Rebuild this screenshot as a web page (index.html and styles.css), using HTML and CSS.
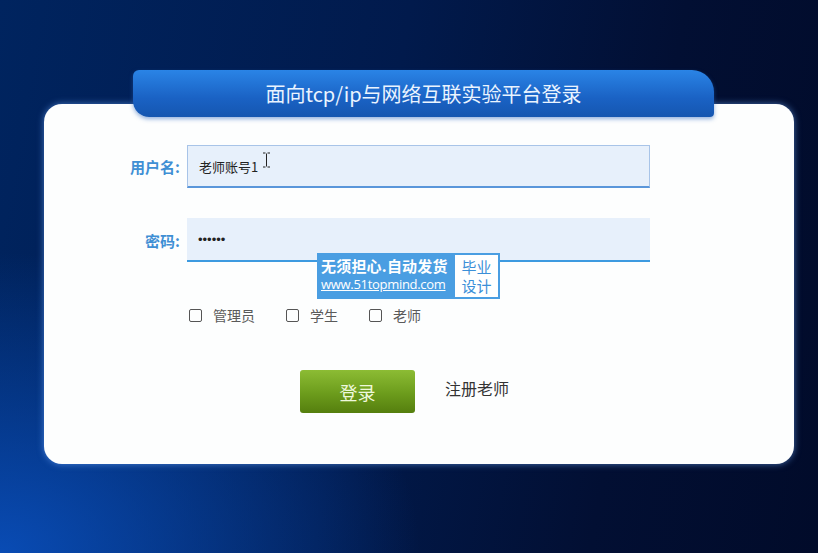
FILE: index.html
```html
<!DOCTYPE html>
<html>
  <head>
    <title>面向tcp/ip与网络互联实验平台登录</title>
    <link rel="stylesheet" href="styles.css">
  </head>
  <body>
    <div class="page">
      <div class="tab">面向tcp/ip与网络互联实验平台登录</div>
      <div class="card">
        <div class="row">
          <label class="label">用户名:</label>
          <div class="field">
            <input type="text" class="input input-user" value="老师账号1" />
            <svg class="ibeam" width="9" height="16" viewBox="0 0 9 16">
              <path d="M1 1h2.5M5.5 1H8M4.5 1.5v13M1 15h2.5M5.5 15H8" stroke="#222" stroke-width="1" fill="none" />
            </svg>
          </div>
        </div>
        <div class="row row-pass">
          <label class="label">密码:</label>
          <div class="field">
            <input type="password" class="input input-pass" value="123456" />
          </div>
        </div>
        <div class="roles">
          <label class="role"><span class="box"></span>管理员</label>
          <label class="role"><span class="box"></span>学生</label>
          <label class="role"><span class="box"></span>老师</label>
        </div>
        <div class="actions">
          <button class="btn-login">登录</button>
          <a class="register">注册老师</a>
        </div>

        <div class="stamp">
          <div class="stamp-main">
            <div class="stamp-title">无须担心.自动发货</div>
            <div class="stamp-url">www.51topmind.com</div>
          </div>
          <div class="stamp-side">
            <span>毕业</span>
            <span>设计</span>
          </div>
        </div>
      </div>
    </div>
  </body>
</html>
```

FILE: styles.css
```css
body {
  margin: 0;
  height: 553px;
  overflow: hidden;
  font-family: "Noto Sans CJK SC", "Noto Sans", sans-serif;
  background:
    radial-gradient(ellipse 420px 300px at 0% 100%, rgba(10, 80, 190, 0.9), rgba(10, 80, 190, 0) 100%),
    linear-gradient(100deg, #00245f 0%, #011a4c 45%, #020f33 75%, #010b2a 100%);
}
.page {
  padding: 70px 0 0 44px;
}
.tab {
  position: relative;
  z-index: 2;
  margin-left: 89px;
  width: 581px;
  height: 47px;
  margin-bottom: -13px;
  line-height: 47px;
  text-align: center;
  color: #eaf4ff;
  font-size: 20px;
  background: linear-gradient(#2a84e6, #1a62c4 60%, #1556b0);
  border-radius: 6px 22px 4px 16px;
  box-shadow: 0 2px 4px rgba(40, 100, 190, 0.5);
}
.card {
  position: relative;
  width: 750px;
  height: 360px;
  box-sizing: border-box;
  padding-top: 41px;
  background: #fdfefe;
  border-radius: 18px;
  box-shadow: 0 0 7px rgba(110, 170, 255, 0.6);
}
.row {
  display: flex;
  align-items: center;
}
.row-pass {
  margin-top: 30px;
}
.label {
  width: 143px;
  box-sizing: border-box;
  padding-right: 7px;
  text-align: right;
  font-size: 15px;
  font-weight: bold;
  color: #3f8fd4;
}
.field {
  position: relative;
}
.input {
  display: block;
  width: 463px;
  height: 43px;
  box-sizing: border-box;
  padding: 0 11px;
  margin: 0;
  font-family: "Noto Sans CJK SC", sans-serif;
  font-size: 13px;
  color: #222;
  background: #e7f0fb;
  outline: none;
}
.input-user {
  border: 1px solid #a8c4e8;
  border-bottom: 2px solid #5a96da;
}
.input-pass {
  height: 44px;
  border: none;
  border-bottom: 2px solid #3d9ae0;
  font-family: "Liberation Sans", sans-serif;
  font-size: 13px;
}
.ibeam {
  position: absolute;
  left: 75px;
  top: 7px;
}
.roles {
  display: flex;
  align-items: center;
  margin-top: 43px;
  padding-left: 145px;
  font-size: 14px;
  color: #5a5a5a;
}
.role {
  display: flex;
  align-items: center;
  height: 20px;
  margin-right: 31px;
}
.box {
  width: 11px;
  height: 11px;
  margin-right: 11px;
  border: 1px solid #555;
  border-radius: 2px;
}
.actions {
  display: flex;
  align-items: center;
  margin-top: 45px;
  padding-left: 256px;
}
.btn-login {
  width: 115px;
  height: 43px;
  padding: 0;
  border: none;
  border-radius: 3px;
  font-family: "Noto Sans CJK SC", sans-serif;
  font-size: 18px;
  color: #eef8dc;
  background: linear-gradient(#8cbc34, #6c9c1c 55%, #557f0e);
  cursor: pointer;
}
.register {
  margin-left: 30px;
  margin-top: -7px;
  font-size: 16px;
  color: #333;
}
.stamp {
  position: absolute;
  left: 273px;
  top: 149px;
  z-index: 3;
  display: flex;
  height: 46px;
  background: #4a9ee2;
}
.stamp-main {
  width: 136px;
  box-sizing: border-box;
  padding: 2px 0 0 4px;
  color: #fff;
}
.stamp-title {
  font-size: 15px;
  font-weight: bold;
  line-height: 21px;
  letter-spacing: 0.2px;
}
.stamp-url {
  font-family: "Open Sans", sans-serif;
  font-size: 13px;
  line-height: 17px;
  text-decoration: underline;
  letter-spacing: -0.3px;
}
.stamp-side {
  display: flex;
  flex-direction: column;
  justify-content: center;
  width: 43px;
  margin: 2px;
  background: #fff;
  color: #3b8fd8;
  font-size: 15px;
  line-height: 19px;
  text-align: center;
}
```
